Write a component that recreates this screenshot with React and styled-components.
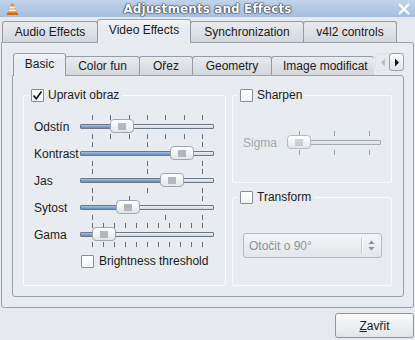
import React from "react"
import styled, { createGlobalStyle } from "styled-components"

const GlobalStyle = createGlobalStyle`
  body {
    margin: 0;
    background: #e6e9ee;
    font-family: "Liberation Sans", Arial, sans-serif;
    font-size: 12px;
    color: #1b1b1b;
  }
`

const outerTabs = [
  { label: "Audio Effects", w: 96 },
  { label: "Video Effects", w: 94, active: true },
  { label: "Synchronization", w: 114 },
  { label: "v4l2 controls", w: 94 },
]

const innerTabs = [
  { label: "Basic", w: 53, active: true },
  { label: "Color fun", w: 75 },
  { label: "Ořez", w: 54 },
  { label: "Geometry", w: 80 },
  { label: "Image modificat", w: 103 },
]

const range = n => Array.from({ length: n }, (_, i) => i / (n - 1))

const sliders = [
  { label: "Odstín", value: 0.273, top: range(7), bottom: range(7) },
  { label: "Kontrast", value: 0.818, top: range(3), bottom: range(3) },
  { label: "Jas", value: 0.727, top: range(3), bottom: range(3) },
  { label: "Sytost", value: 0.327, top: [0, 1 / 3, 1], bottom: [0, 2 / 3, 1] },
  { label: "Gama", value: 0.109, top: range(11), bottom: range(11) },
]

const HANDLE = 24

const Window = styled.div`
  width: 415px;
  height: 340px;
  display: flex;
  flex-direction: column;
  background: #e6e9ee;
  overflow: hidden;
`

const TitleBar = styled.div`
  height: 17px;
  flex: none;
  display: grid;
  grid-template-columns: 30px 1fr 30px;
  align-items: center;
  background: linear-gradient(#c2d4ec, #a6bee1);
`

const TitleIcon = styled.div`
  display: flex;
  padding-left: 7px;
`

const TitleText = styled.div`
  text-align: center;
  font-family: "DejaVu Sans", sans-serif;
  font-weight: bold;
  font-size: 12px;
  color: #fff;
  letter-spacing: 0.1px;
  text-shadow: 0 0 1px #1d2a40, 0 0 2px #1d2a40, 0 0 1px #000;
`

const CloseBox = styled.div`
  display: flex;
  justify-content: flex-end;
  padding-right: 4px;
`

const Body = styled.div`
  flex: 1;
  display: flex;
  flex-direction: column;
  padding: 0 1px;
`

const TabBar = styled.div`
  height: 25px;
  flex: none;
  display: flex;
  align-items: flex-end;
  padding-left: 1px;
  position: relative;
  z-index: 1;
`

const Tab = styled.div`
  box-sizing: border-box;
  flex: none;
  width: ${p => p.$w}px;
  height: ${p => (p.$active ? 24 : 21)}px;
  margin-left: -1px;
  margin-bottom: ${p => (p.$active ? -1 : 0)}px;
  padding-bottom: ${p => (p.$active ? 3 : 0)}px;
  border: 1px solid #959ca6;
  border-top-color: ${p => (p.$active ? "#8aa4c8" : "#959ca6")};
  border-bottom: none;
  border-radius: 3px 3px 0 0;
  display: flex;
  align-items: center;
  justify-content: center;
  white-space: nowrap;
  font-size: 12px;
  position: relative;
  z-index: ${p => (p.$active ? 2 : 1)};
  background: ${p =>
    p.$active
      ? "linear-gradient(#f3f5f8, #e8ebf0 6px)"
      : "linear-gradient(#e9ebee, #d3d7dc)"};
  &:first-child {
    margin-left: 0;
  }
`

const Pane = styled.div`
  height: 266px;
  flex: none;
  box-sizing: border-box;
  border: 1px solid #9ba2ab;
  border-radius: 0 3px 3px 3px;
  background: #e8ebf0;
  padding: 10px 9px 10px 10px;
  display: flex;
  flex-direction: column;
`

const InnerTabBar = styled.div`
  height: 22px;
  flex: none;
  display: flex;
  position: relative;
  z-index: 1;
`

const InnerTabs = styled.div`
  flex: 1;
  min-width: 0;
  height: 23px;
  display: flex;
  align-items: flex-start;
  overflow: hidden;
  padding-left: 1px;
`

const InnerTab = styled(Tab)`
  height: ${p => (p.$active ? 23 : 19)}px;
  margin-top: ${p => (p.$active ? 0 : 3)}px;
  margin-bottom: 0;
  padding-bottom: ${p => (p.$active ? 2 : 0)}px;
  justify-content: ${p => (p.$clip ? "flex-start" : "center")};
  padding-left: ${p => (p.$clip ? 11 : 0)}px;
  border-right: ${p => (p.$clip ? "none" : "1px solid #959ca6")};
`

const ScrollButtons = styled.div`
  flex: none;
  display: flex;
  align-items: flex-start;
`

const ScrollButton = styled.div`
  box-sizing: border-box;
  width: 15px;
  height: 18px;
  display: flex;
  align-items: center;
  justify-content: center;
  border: 1px solid ${p => (p.$disabled ? "#dde0e4" : "#9aa1aa")};
  border-radius: 3px;
  background: ${p =>
    p.$disabled ? "#e7eaee" : "linear-gradient(#fbfbfc, #e2e5e9)"};
  & + & {
    margin-left: -1px;
  }
`

const InnerPane = styled.div`
  flex: 1;
  box-sizing: border-box;
  border: 1px solid #9ba2ab;
  border-radius: 0 3px 3px 3px;
  padding: 12px 10px 10px 10px;
  display: grid;
  grid-template-columns: 203px 160px;
  column-gap: 6px;
  align-items: start;
`

const Column = styled.div`
  display: flex;
  flex-direction: column;
  gap: 7px;
`

const Group = styled.fieldset`
  margin: 0;
  padding: 0;
  min-width: 0;
  box-sizing: border-box;
  height: ${p => p.$h}px;
  border: 1px solid #fafbfc;
  border-radius: 2px;
`

const Legend = styled.legend`
  margin-left: 4px;
  padding: 0 3px;
  height: 14px;
`

const LegendRow = styled.span`
  display: inline-flex;
  align-items: center;
  gap: 4px;
  height: 14px;
  line-height: 14px;
`

const GroupBody = styled.div`
  padding: ${p => p.$pt}px 0 0 10px;
  display: flex;
  flex-direction: column;
`

const Box = styled.span`
  box-sizing: border-box;
  width: 13px;
  height: 13px;
  flex: none;
  display: inline-flex;
  align-items: center;
  justify-content: center;
  border: 1px solid #878e98;
  border-radius: 1px;
  background: linear-gradient(#ffffff, #f1f3f5);
`

const SliderRow = styled.div`
  display: flex;
  align-items: center;
  height: 27px;
`

const RowLabel = styled.span`
  width: ${p => p.$w}px;
  flex: none;
  white-space: nowrap;
  color: ${p => (p.$disabled ? "#a2a7ae" : "inherit")};
`

const SliderBox = styled.div`
  width: ${p => p.$w}px;
  height: 27px;
  flex: none;
  position: relative;
  display: flex;
  flex-direction: column;
`

const TickRow = styled.div`
  position: relative;
  height: 5px;
  margin-top: ${p => p.$mt}px;
`

const Tick = styled.span`
  position: absolute;
  top: 0;
  width: 1px;
  height: 5px;
  background: ${p => (p.$disabled ? "#9ba0a7" : "#6a7077")};
`

const Groove = styled.div`
  box-sizing: border-box;
  height: 5px;
  margin-top: 4px;
  border: 1px solid ${p => (p.$disabled ? "#a3aab3" : "#6d7886")};
  border-radius: 1px;
  background: ${p =>
    p.$disabled ? "#e3e6ea" : "linear-gradient(#eef0f3, #d2d7dd)"};
  overflow: hidden;
`

const Fill = styled.div`
  height: 100%;
  background: ${p =>
    p.$disabled
      ? "linear-gradient(#b8cbe6, #8aa8d3)"
      : "linear-gradient(#a8c2e6, #5f88c4)"};
`

const Handle = styled.div`
  position: absolute;
  top: 6px;
  width: ${HANDLE}px;
  height: 14px;
  box-sizing: border-box;
  border: 1px solid ${p => (p.$disabled ? "#b7bcc3" : "#a0a6ae")};
  border-radius: 4px;
  background: linear-gradient(#ffffff, #f2f3f5 50%, #e2e5e8);
  display: flex;
  align-items: center;
  justify-content: center;
`

const Grip = styled.span`
  width: 8px;
  height: 7px;
  background-image: radial-gradient(circle, #aeb3b9 0.7px, transparent 0.8px);
  background-size: 2px 2px;
  opacity: ${p => (p.$disabled ? 0.6 : 1)};
`

const CheckRow = styled.label`
  display: flex;
  align-items: center;
  gap: 5px;
  margin: 6px 0 0 47px;
  height: 14px;
`

const Combo = styled.div`
  box-sizing: border-box;
  margin: 29px 9px 0 10px;
  height: 25px;
  border: 1px solid #b5bbc3;
  border-radius: 3px;
  background: linear-gradient(#f3f5f7, #e3e6ea);
  display: flex;
  align-items: center;
  color: #8d9299;
`

const ComboText = styled.span`
  flex: 1;
  padding-left: 5px;
`

const ComboSep = styled.span`
  width: 1px;
  height: 16px;
  background: #c3c8cf;
  box-shadow: 1px 0 #fafbfc;
`

const ComboArrows = styled.span`
  width: 19px;
  display: flex;
  justify-content: center;
`

const Footer = styled.div`
  flex: 1;
  display: flex;
  justify-content: flex-end;
  align-items: flex-start;
  padding-top: 5px;
`

const Button = styled.button`
  width: 79px;
  height: 25px;
  box-sizing: border-box;
  border: 1px solid #8f959d;
  border-radius: 3px;
  background: linear-gradient(#fbfbfc, #e2e5e9);
  font-family: "Liberation Sans", Arial, sans-serif;
  font-size: 12px;
  color: #1b1b1b;
  padding: 0;
  u {
    text-decoration: underline;
  }
`

const Cone = () => (
  <svg width="11" height="12" viewBox="0 0 11 12">
    <path d="M4.2 0.5h2.6l3 9.5H1.2z" fill="#f28c1a" />
    <path d="M3.4 3.6h4.2l0.6 2H2.8z" fill="#fff" />
    <path d="M2.5 6.6h6l0.5 1.6H2z" fill="#fff" />
    <rect x="0" y="9.8" width="11" height="2.2" rx="0.5" fill="#d46c0c" />
  </svg>
)

const CloseIcon = () => (
  <svg width="14" height="12" viewBox="0 0 14 12">
    <path d="M2 1l10 10M12 1L2 11" stroke="#fff" strokeWidth="2.2" />
  </svg>
)

const Check = () => (
  <svg width="11" height="11" viewBox="0 0 11 11">
    <path d="M1.5 5.5l2.8 3.2L9.5 1.5" fill="none" stroke="#111" strokeWidth="1.6" />
  </svg>
)

const Arrow = ({ dir, color }) => (
  <svg width="6" height="9" viewBox="0 0 6 9">
    <path d={dir === "left" ? "M5 0.5v8L1 4.5z" : "M1 0.5v8L5 4.5z"} fill={color} />
  </svg>
)

const UpDown = () => (
  <svg width="7" height="11" viewBox="0 0 7 11">
    <path d="M3.5 0.5L6.5 4H0.5z M3.5 10.5L6.5 7H0.5z" fill="#8a9097" />
  </svg>
)

const CheckBox = ({ checked }) => <Box>{checked && <Check />}</Box>

const Slider = ({ width, value, top, bottom, disabled }) => {
  const span = width - HANDLE
  const pos = t => Math.round(HANDLE / 2 + t * span) - 0.5
  const left = Math.round(value * span)
  return (
    <SliderBox $w={width}>
      <TickRow $mt={2}>
        {top.map(t => (
          <Tick key={t} $disabled={disabled} style={{ left: pos(t) }} />
        ))}
      </TickRow>
      <Groove $disabled={disabled}>
        <Fill $disabled={disabled} style={{ width: left + 2 }} />
      </Groove>
      <TickRow $mt={5}>
        {bottom.map(t => (
          <Tick key={t} $disabled={disabled} style={{ left: pos(t) }} />
        ))}
      </TickRow>
      <Handle $disabled={disabled} style={{ left }}>
        <Grip $disabled={disabled} />
      </Handle>
    </SliderBox>
  )
}

export default function App() {
  return (
    <Window>
      <GlobalStyle />
      <TitleBar>
        <TitleIcon>
          <Cone />
        </TitleIcon>
        <TitleText>Adjustments and Effects</TitleText>
        <CloseBox>
          <CloseIcon />
        </CloseBox>
      </TitleBar>
      <Body>
        <TabBar>
          {outerTabs.map(t => (
            <Tab key={t.label} $w={t.w} $active={t.active}>
              {t.label}
            </Tab>
          ))}
        </TabBar>
        <Pane>
          <InnerTabBar>
            <InnerTabs>
              {innerTabs.map((t, i) => (
                <InnerTab
                  key={t.label}
                  $w={t.w}
                  $active={t.active}
                  $clip={i === innerTabs.length - 1}
                >
                  {t.label}
                </InnerTab>
              ))}
            </InnerTabs>
            <ScrollButtons>
              <ScrollButton $disabled>
                <Arrow dir="left" color="#b9bec5" />
              </ScrollButton>
              <ScrollButton>
                <Arrow dir="right" color="#111" />
              </ScrollButton>
            </ScrollButtons>
          </InnerTabBar>
          <InnerPane>
            <Group $h={198}>
              <Legend>
                <LegendRow>
                  <CheckBox checked />
                  Upravit obraz
                </LegendRow>
              </Legend>
              <GroupBody $pt={11}>
                {sliders.map(s => (
                  <SliderRow key={s.label}>
                    <RowLabel $w={46}>{s.label}</RowLabel>
                    <Slider width={134} value={s.value} top={s.top} bottom={s.bottom} />
                  </SliderRow>
                ))}
                <CheckRow>
                  <CheckBox />
                  Brightness threshold
                </CheckRow>
              </GroupBody>
            </Group>
            <Column>
              <Group $h={95}>
                <Legend>
                  <LegendRow>
                    <CheckBox />
                    Sharpen
                  </LegendRow>
                </Legend>
                <GroupBody $pt={27}>
                  <SliderRow>
                    <RowLabel $w={44} $disabled>
                      Sigma
                    </RowLabel>
                    <Slider width={94} value={0} top={range(3)} bottom={range(3)} disabled />
                  </SliderRow>
                </GroupBody>
              </Group>
              <Group $h={96}>
                <Legend>
                  <LegendRow>
                    <CheckBox />
                    Transform
                  </LegendRow>
                </Legend>
                <Combo>
                  <ComboText>Otočit o 90°</ComboText>
                  <ComboSep />
                  <ComboArrows>
                    <UpDown />
                  </ComboArrows>
                </Combo>
              </Group>
            </Column>
          </InnerPane>
        </Pane>
        <Footer>
          <Button>
            <u>Z</u>avřit
          </Button>
        </Footer>
      </Body>
    </Window>
  )
}
